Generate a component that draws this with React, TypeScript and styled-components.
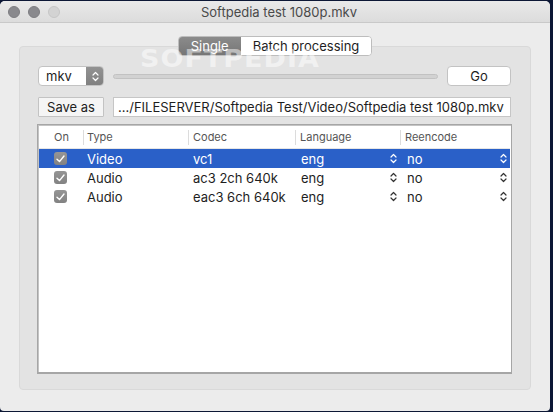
import React from "react";
import styled, { createGlobalStyle } from "styled-components";

const Global = createGlobalStyle`
  html, body { margin: 0; padding: 0; background: #0c1735; }
  body { font-family: Inter, "Noto Sans", "Liberation Sans", sans-serif; -webkit-font-smoothing: antialiased; }
  #root { width: 553px; height: 412px; overflow: hidden; }
`;

const Window = styled.div`
  margin-top: 1px;
  width: 550px;
  height: 410px;
  background: #ececec;
  border-radius: 5px 5px 4px 4px;
  display: flex;
  flex-direction: column;
  overflow: hidden;
  position: relative;
`;

const TitleBar = styled.div`
  height: 21px;
  background: linear-gradient(#e9e9e9, #dcdcdc);
  border-bottom: 1px solid #c9c9c9;
  display: grid;
  grid-template-columns: 1fr auto 1fr;
  align-items: center;
  padding: 0 0 0 8px;
`;

const Lights = styled.div`
  display: flex;
  gap: 8px;
`;

const Light = styled.span<{ $dim?: boolean }>`
  width: 12px;
  height: 12px;
  border-radius: 50%;
  box-sizing: border-box;
  background: ${(p) => (p.$dim ? "#d3d3d3" : "#89898d")};
  border: 1px solid ${(p) => (p.$dim ? "#c6c6c6" : "#7d7d81")};
`;

const Title = styled.div`
  font-size: 13px;
  color: #4a4a4a;
`;

const Body = styled.div`
  flex: 1;
  display: flex;
  flex-direction: column;
  padding: 13px 19px 21px 19px;
  position: relative;
`;

const Segmented = styled.div`
  align-self: center;
  display: flex;
  height: 20px;
  box-sizing: border-box;
  border: 1px solid #bdbdbd;
  border-radius: 4px;
  overflow: hidden;
  margin-bottom: -10px;
  position: relative;
  z-index: 1;
  background: #fff;
`;

const Segment = styled.div<{ $active?: boolean }>`
  display: flex;
  align-items: center;
  justify-content: center;
  font-size: 13px;
  padding: 0 ${(p) => (p.$active ? "10px" : "12px")};
  width: ${(p) => (p.$active ? "62px" : "auto")};
  box-sizing: border-box;
  color: ${(p) => (p.$active ? "#fff" : "#1e1e1e")};
  background: ${(p) => (p.$active ? "linear-gradient(#8b8b8b, #767676)" : "#fff")};
`;

const TabPanel = styled.div`
  flex: 1;
  background: #e3e3e3;
  border: 1px solid #d9d9d9;
  border-radius: 4px;
  padding: 19px 19px 15px 18px;
  display: flex;
  flex-direction: column;
`;

const Row = styled.div<{ $gap: number }>`
  display: flex;
  align-items: center;
  gap: 9px;
  height: 20px;
  margin-bottom: ${(p) => p.$gap}px;
`;

const Popup = styled.div`
  width: 66px;
  height: 20px;
  box-sizing: border-box;
  background: #fff;
  border: 1px solid #c3c3c3;
  border-radius: 4px;
  display: flex;
  align-items: center;
  justify-content: space-between;
  font-size: 13px;
  color: #1e1e1e;
  padding-left: 7px;
  overflow: hidden;
`;

const Stepper = styled.div`
  width: 18px;
  height: 20px;
  margin-right: -1px;
  background: linear-gradient(#939393, #7f7f7f);
  border-radius: 0 4px 4px 0;
  display: flex;
  align-items: center;
  justify-content: center;
`;

const Track = styled.div`
  flex: 1;
  height: 5px;
  box-sizing: border-box;
  background: #d2d2d2;
  border: 1px solid #c2c2c2;
  border-radius: 3px;
`;

const Button = styled.div<{ $w: number; $square?: boolean }>`
  width: ${(p) => p.$w}px;
  height: 20px;
  box-sizing: border-box;
  background: ${(p) => (p.$square ? "#f5f5f5" : "#fff")};
  border: 1px solid #c3c3c3;
  border-radius: ${(p) => (p.$square ? "1px" : "4px")};
  display: flex;
  align-items: center;
  justify-content: center;
  font-size: 13px;
  color: #1e1e1e;
`;

const Field = styled.div`
  flex: 1;
  height: 20px;
  box-sizing: border-box;
  background: #fff;
  border: 1px solid #c6c6c6;
  display: flex;
  align-items: center;
  padding-left: 4px;
  font-size: 13px;
  color: #1e1e1e;
  white-space: nowrap;
  overflow: hidden;
`;

const Table = styled.div`
  flex: 1;
  margin-left: -1px;
  margin-right: -1px;
  background: #fff;
  border: 1px solid #a6a6a6;
  border-bottom-width: 2px;
  box-shadow: inset 1px 1px 0 #c4c4c4;
  padding: 1px;
  display: flex;
  flex-direction: column;
`;

const cols = "44px 105px 107px 105px 1fr";

const HeaderRow = styled.div`
  display: grid;
  grid-template-columns: ${cols};
  height: 22px;
  border-bottom: 1px solid #e6e6e6;
  align-items: center;
`;

const HeadCell = styled.div<{ $pad: number; $sep?: boolean }>`
  font-size: 11px;
  color: #555;
  padding-left: ${(p) => p.$pad}px;
  height: 15px;
  display: flex;
  align-items: center;
  border-left: ${(p) => (p.$sep ? "1px solid #dcdcdc" : "none")};
`;

const DataRow = styled.div<{ $selected?: boolean }>`
  display: grid;
  grid-template-columns: ${cols};
  height: 19px;
  align-items: center;
  background: ${(p) => (p.$selected ? "#2a60c8" : "transparent")};
  color: ${(p) => (p.$selected ? "#fff" : "#1e1e1e")};
  font-size: 13px;
`;

const Cell = styled.div<{ $pad: number }>`
  padding-left: ${(p) => p.$pad}px;
  display: flex;
  align-items: center;
  white-space: nowrap;
`;

const PopCell = styled.div<{ $pad: number; $right: number }>`
  padding-left: ${(p) => p.$pad}px;
  padding-right: ${(p) => p.$right}px;
  display: flex;
  align-items: center;
  justify-content: space-between;
`;

const Check = styled.div`
  width: 13px;
  height: 13px;
  border-radius: 3px;
  background: linear-gradient(#959595, #828282);
  display: flex;
  align-items: center;
  justify-content: center;
  margin-left: 15px;
`;

const Watermark = styled.div`
  position: absolute;
  left: 140px;
  top: 42px;
  font-family: "DejaVu Sans", "Liberation Sans", sans-serif;
  font-weight: 700;
  font-size: 27px;
  letter-spacing: 1px;
  color: rgba(255, 255, 255, 0.5);
  pointer-events: none;
  z-index: 2;
  transform: scaleY(0.9);
`;

const Chevrons = ({ color }: { color: string }) => (
  <svg width="7" height="11" viewBox="0 0 7 11" fill="none">
    <path d="M1 4 L3.5 1.5 L6 4" stroke={color} strokeWidth="1.2" strokeLinecap="round" strokeLinejoin="round" />
    <path d="M1 7 L3.5 9.5 L6 7" stroke={color} strokeWidth="1.2" strokeLinecap="round" strokeLinejoin="round" />
  </svg>
);

const Tick = () => (
  <svg width="9" height="8" viewBox="0 0 9 8" fill="none">
    <path d="M1 4.2 L3.5 6.6 L8 1" stroke="#fff" strokeWidth="1.4" strokeLinecap="round" strokeLinejoin="round" />
  </svg>
);

const rows = [
  { type: "Video", codec: "vc1", lang: "eng", re: "no", selected: true },
  { type: "Audio", codec: "ac3 2ch 640k", lang: "eng", re: "no" },
  { type: "Audio", codec: "eac3 6ch 640k", lang: "eng", re: "no" },
];

export default function App() {
  return (
    <>
      <Global />
      <Window>
        <TitleBar>
          <Lights>
            <Light />
            <Light />
            <Light $dim />
          </Lights>
          <Title>Softpedia test 1080p.mkv</Title>
          <div />
        </TitleBar>
        <Body>
          <Segmented>
            <Segment $active>Single</Segment>
            <Segment>Batch processing</Segment>
          </Segmented>
          <TabPanel>
            <Row $gap={11}>
              <Popup>
                mkv
                <Stepper>
                  <Chevrons color="#fff" />
                </Stepper>
              </Popup>
              <Track />
              <Button $w={64}>Go</Button>
            </Row>
            <Row $gap={7}>
              <Button $w={66} $square>Save as</Button>
              <Field>.../FILESERVER/Softpedia Test/Video/Softpedia test 1080p.mkv</Field>
            </Row>
            <Table>
              <HeaderRow>
                <HeadCell $pad={15}>On</HeadCell>
                <HeadCell $pad={3} $sep>Type</HeadCell>
                <HeadCell $pad={4} $sep>Codec</HeadCell>
                <HeadCell $pad={4} $sep>Language</HeadCell>
                <HeadCell $pad={4} $sep>Reencode</HeadCell>
              </HeaderRow>
              {rows.map((r, i) => (
                <DataRow key={i} $selected={r.selected}>
                  <Cell $pad={0}>
                    <Check>
                      <Tick />
                    </Check>
                  </Cell>
                  <Cell $pad={4}>{r.type}</Cell>
                  <Cell $pad={5}>{r.codec}</Cell>
                  <PopCell $pad={6} $right={3}>
                    {r.lang}
                    <Chevrons color={r.selected ? "#fff" : "#333"} />
                  </PopCell>
                  <PopCell $pad={7} $right={3}>
                    {r.re}
                    <Chevrons color={r.selected ? "#fff" : "#333"} />
                  </PopCell>
                </DataRow>
              ))}
            </Table>
          </TabPanel>
        </Body>
        <Watermark>SOFTPEDIA</Watermark>
      </Window>
    </>
  );
}
